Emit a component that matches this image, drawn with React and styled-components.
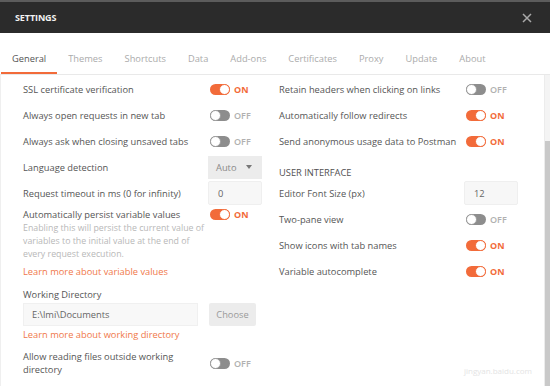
import styled, { createGlobalStyle } from "styled-components";

const GlobalStyle = createGlobalStyle`
  html, body {
    margin: 0;
    padding: 0;
    background: #fff;
  }
  body {
    font-family: "Open Sans", "Liberation Sans", sans-serif;
    color: #505050;
  }
`;

const leftRows = [
  { label: "SSL certificate verification", on: true },
  { label: "Always open requests in new tab", on: false },
  { label: "Always ask when closing unsaved tabs", on: false },
];

const rightRows = [
  { label: "Retain headers when clicking on links", on: false },
  { label: "Automatically follow redirects", on: true },
  { label: "Send anonymous usage data to Postman", on: true },
];

const uiRows = [
  { label: "Two-pane view", on: false },
  { label: "Show icons with tab names", on: true },
  { label: "Variable autocomplete", on: true },
];

const tabs = ["General", "Themes", "Shortcuts", "Data", "Add-ons", "Certificates", "Proxy", "Update", "About"];

function Toggle({ on }) {
  return (
    <ToggleWrap>
      <Track $on={on}>
        <Knob $on={on} />
      </Track>
      <ToggleText $on={on}>{on ? "ON" : "OFF"}</ToggleText>
    </ToggleWrap>
  );
}

export default function App() {
  return (
    <Window>
      <GlobalStyle />
      <Header>
        <Title>SETTINGS</Title>
        <Close>
          <svg width="10" height="10" viewBox="0 0 10 10">
            <path d="M1 1 L9 9 M9 1 L1 9" stroke="#a9a9a9" strokeWidth="1.5" />
          </svg>
        </Close>
      </Header>

      <TabBar>
        {tabs.map((t, i) => (
          <Tab key={t} $active={i === 0}>{t}</Tab>
        ))}
      </TabBar>

      <Body>
        <Content>
          <Column>
            {leftRows.map(r => (
              <Row key={r.label}>
                <Label>{r.label}</Label>
                <Toggle on={r.on} />
              </Row>
            ))}
            <Row>
              <Label>Language detection</Label>
              <Select>
                Auto
                <Caret />
              </Select>
            </Row>
            <Row>
              <Label>Request timeout in ms (0 for infinity)</Label>
              <Input>0</Input>
            </Row>
            <Block>
              <BlockTop>
                <Label>Automatically persist variable values</Label>
                <Toggle on />
              </BlockTop>
              <Hint>
                Enabling this will persist the current value of variables to the initial value at the end of every request execution.
              </Hint>
              <Link>Learn more about variable values</Link>
            </Block>
            <Block>
              <Label>Working Directory</Label>
              <DirRow>
                <DirInput>E:\lmi\Documents</DirInput>
                <Button>Choose</Button>
              </DirRow>
              <Link $tight>Learn more about working directory</Link>
            </Block>
            <TallRow>
              <Label $wrap>Allow reading files outside working directory</Label>
              <Toggle on={false} />
            </TallRow>
          </Column>

          <Column>
            {rightRows.map(r => (
              <Row key={r.label}>
                <Label>{r.label}</Label>
                <Toggle on={r.on} />
              </Row>
            ))}
            <Heading>USER INTERFACE</Heading>
            <Row>
              <Label>Editor Font Size (px)</Label>
              <Input>12</Input>
            </Row>
            {uiRows.map(r => (
              <Row key={r.label}>
                <Label>{r.label}</Label>
                <Toggle on={r.on} />
              </Row>
            ))}
          </Column>
        </Content>
        <Scrollbar>
          <Thumb />
        </Scrollbar>
        <Watermark>jingyan.baidu.com</Watermark>
      </Body>
    </Window>
  );
}

const Window = styled.div`
  width: 550px;
  height: 386px;
  overflow: hidden;
  display: flex;
  flex-direction: column;
  background: #fff;
`;

const Header = styled.div`
  height: 31px;
  flex-shrink: 0;
  border-top: 2px solid #5c5c5c;
  background: #2b2b2b;
  display: flex;
  align-items: center;
  justify-content: space-between;
  padding: 0 18px 0 15px;
`;

const Title = styled.div`
  color: #f2f2f2;
  font-size: 9px;
  font-weight: 700;
  letter-spacing: -0.1px;
`;

const Close = styled.div`
  display: flex;
  align-items: center;
`;

const TabBar = styled.div`
  height: 41px;
  flex-shrink: 0;
  display: flex;
  align-items: flex-end;
  padding-left: 1px;
  border-bottom: 1px solid #e9e9e9;
`;

const Tab = styled.div`
  padding: 0 11px 7px;
  font-size: 9.3px;
  color: ${p => (p.$active ? "#555" : "#ababab")};
  border-bottom: 2px solid ${p => (p.$active ? "#f26b3a" : "transparent")};
`;

const Body = styled.div`
  flex: 1;
  display: flex;
  position: relative;
  min-height: 0;
`;

const Content = styled.div`
  flex: 1;
  display: grid;
  grid-template-columns: 256px 256px;
  align-items: start;
  padding: 1px 0 0 22px;
  border-left: 1px solid #efefef;
`;

const Column = styled.div`
  display: flex;
  flex-direction: column;
`;

const Row = styled.div`
  height: 26px;
  display: grid;
  grid-template-columns: 185px 1fr;
  align-items: center;
`;

const TallRow = styled(Row)`
  height: 30px;
  margin-top: 7px;
`;

const Label = styled.div`
  font-size: 9.3px;
  line-height: 13px;
  color: #555;
  white-space: ${p => (p.$wrap ? "normal" : "nowrap")};
  padding-right: ${p => (p.$wrap ? "20px" : "0")};
`;

const ToggleWrap = styled.div`
  display: flex;
  align-items: center;
  gap: 4px;
  padding-left: 2px;
`;

const Track = styled.div`
  width: 20px;
  height: 11px;
  border-radius: 6px;
  box-sizing: border-box;
  background: ${p => (p.$on ? "#f26b3a" : "#8d8d8d")};
  display: flex;
  justify-content: ${p => (p.$on ? "flex-end" : "flex-start")};
  align-items: center;
`;

const Knob = styled.div`
  width: 11px;
  height: 11px;
  border-radius: 50%;
  box-sizing: border-box;
  background: #fff;
  border: 1.5px solid ${p => (p.$on ? "#f26b3a" : "#9a9a9a")};
`;

const ToggleText = styled.span`
  font-size: 9px;
  font-weight: ${p => (p.$on ? 700 : 600)};
  color: ${p => (p.$on ? "#f26b3a" : "#b0b0b0")};
`;

const Select = styled.div`
  width: 54px;
  height: 23px;
  box-sizing: border-box;
  background: #ececec;
  font-size: 9.3px;
  color: #8a8a8a;
  display: flex;
  align-items: center;
  justify-content: space-between;
  padding: 0 10px 0 8px;
`;

const Caret = styled.span`
  width: 0;
  height: 0;
  border-left: 3px solid transparent;
  border-right: 3px solid transparent;
  border-top: 4px solid #777;
`;

const Input = styled.div`
  width: 54px;
  height: 24px;
  box-sizing: border-box;
  background: #f7f7f7;
  border: 1px solid #efefef;
  border-radius: 2px;
  font-size: 9.3px;
  color: #666;
  display: flex;
  align-items: center;
  padding-left: 9px;
`;

const Block = styled.div`
  display: flex;
  flex-direction: column;
  padding-top: 2px;
`;

const BlockTop = styled.div`
  display: grid;
  grid-template-columns: 185px 1fr;
  align-items: center;
`;

const Hint = styled.div`
  width: 182px;
  margin-top: 1px;
  font-size: 8.8px;
  line-height: 13px;
  color: #b8b8b8;
`;

const Link = styled.div`
  margin-top: ${p => (p.$tight ? "2px" : "4px")};
  margin-bottom: ${p => (p.$tight ? "0" : "8px")};
  font-size: 9.3px;
  line-height: 13px;
  color: #f0784a;
`;

const DirRow = styled.div`
  display: flex;
  align-items: center;
  gap: 11px;
  margin-top: 2px;
`;

const DirInput = styled.div`
  width: 175px;
  height: 23px;
  box-sizing: border-box;
  background: #f8f8f8;
  border: 1px solid #f0f0f0;
  font-size: 9.3px;
  color: #666;
  display: flex;
  align-items: center;
  padding-left: 8px;
`;

const Button = styled.div`
  width: 47px;
  height: 23px;
  background: #ececec;
  border-radius: 2px;
  font-size: 9.3px;
  color: #9a9a9a;
  display: flex;
  align-items: center;
  justify-content: center;
`;

const Heading = styled.div`
  height: 26px;
  display: flex;
  align-items: flex-end;
  font-size: 9.3px;
  color: #505050;
  padding-bottom: 1px;
  box-sizing: border-box;
`;

const Scrollbar = styled.div`
  width: 5px;
  flex-shrink: 0;
  background: #f4f4f4;
  border-left: 1px solid #ececec;
  display: flex;
  flex-direction: column;
`;

const Thumb = styled.div`
  margin-top: 66px;
  flex: 1;
  background: #c9c9c9;
`;

const Watermark = styled.div`
  position: absolute;
  right: 18px;
  bottom: 10px;
  font-size: 8px;
  color: #e4e4e4;
`;
